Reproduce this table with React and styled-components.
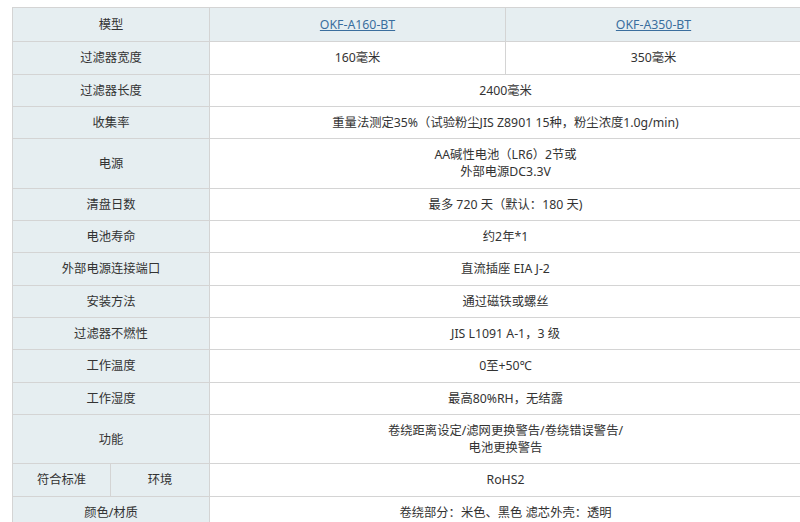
import React from "react";
import styled, { createGlobalStyle } from "styled-components";

const Global = createGlobalStyle`
  html, body { margin: 0; padding: 0; background: #fff; overflow: hidden; }
  body { font-family: "Noto Sans", "Noto Sans CJK SC", sans-serif; }
`;

const Page = styled.div`
  padding: 7px 0 0 12px;
  width: 800px;
  box-sizing: border-box;
`;

const Table = styled.table`
  border-collapse: collapse;
  table-layout: fixed;
  width: 789px;
  font-size: 12.3px;
  line-height: 17.3px;
  color: #333;
`;

const Cell = styled.td`
  border: 1px solid #d4d4d4;
  padding: 7px 6px;
  text-align: center;
  vertical-align: middle;
  background: ${(p) => (p.$head ? "#e6eef1" : "#fff")};
`;

const HeadCell = styled(Cell)`
  padding-top: 8px;
  padding-bottom: 8px;
`;

const Link = styled.a`
  color: #3a6e9e;
  text-decoration: underline;
`;

const rows = [
  ["过滤器长度", "2400毫米"],
  ["收集率", "重量法测定35%（试验粉尘JIS Z8901 15种，粉尘浓度1.0g/min)"],
  ["电源", ["AA碱性电池（LR6）2节或", "外部电源DC3.3V"]],
  ["清盘日数", "最多 720 天（默认：180 天)"],
  ["电池寿命", "约2年*1"],
  ["外部电源连接端口", "直流插座 EIA J-2"],
  ["安装方法", "通过磁铁或螺丝"],
  ["过滤器不燃性", "JIS L1091 A-1，3 级"],
  ["工作温度", "0至+50℃"],
  ["工作湿度", "最高80%RH，无结露"],
  ["功能", ["卷绕距离设定/滤网更换警告/卷绕错误警告/", "电池更换警告"]],
];

const renderValue = (v) =>
  Array.isArray(v)
    ? v.map((line, i) => (
        <React.Fragment key={i}>
          {i > 0 && <br />}
          {line}
        </React.Fragment>
      ))
    : v;

export default function App() {
  return (
    <>
      <Global />
      <Page>
        <Table>
          <colgroup>
            <col style={{ width: 98 }} />
            <col style={{ width: 99 }} />
            <col style={{ width: 296 }} />
            <col style={{ width: 296 }} />
          </colgroup>
          <tbody>
            <tr>
              <HeadCell $head colSpan={2}>模型</HeadCell>
              <HeadCell $head><Link href="#">OKF-A160-BT</Link></HeadCell>
              <HeadCell $head><Link href="#">OKF-A350-BT</Link></HeadCell>
            </tr>
            <tr>
              <Cell $head colSpan={2}>过滤器宽度</Cell>
              <Cell>160毫米</Cell>
              <Cell>350毫米</Cell>
            </tr>
            {rows.map(([label, value]) => (
              <tr key={label}>
                <Cell $head colSpan={2}>{label}</Cell>
                <Cell colSpan={2}>{renderValue(value)}</Cell>
              </tr>
            ))}
            <tr>
              <Cell $head>符合标准</Cell>
              <Cell $head>环境</Cell>
              <Cell colSpan={2}>RoHS2</Cell>
            </tr>
            <tr>
              <Cell $head colSpan={2}>颜色/材质</Cell>
              <Cell colSpan={2}>卷绕部分：米色、黑色 滤芯外壳：透明</Cell>
            </tr>
          </tbody>
        </Table>
      </Page>
    </>
  );
}
